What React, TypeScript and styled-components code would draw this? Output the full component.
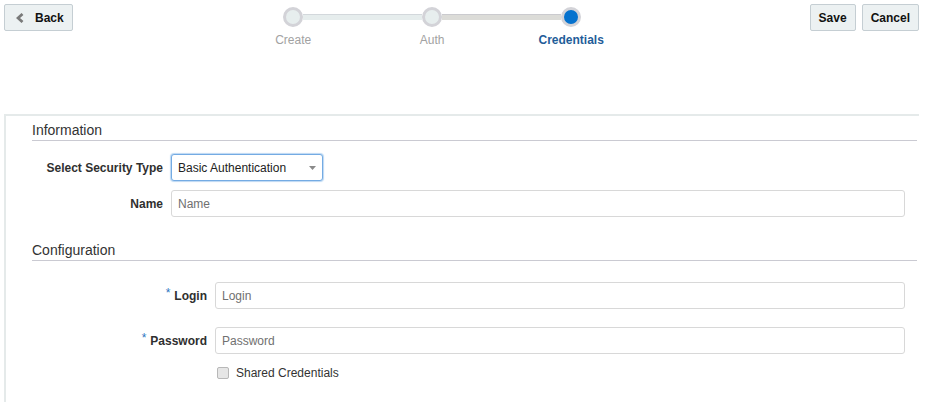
import React from "react";
import styled, { createGlobalStyle } from "styled-components";

const GlobalStyle = createGlobalStyle`
  html, body { margin: 0; padding: 0; background: #ffffff; }
  body {
    font-family: "Liberation Sans", Arial, sans-serif;
    color: #333333;
    overflow: hidden;
  }
  * { box-sizing: border-box; }
`;

const Page = styled.div`
  width: 925px;
  height: 402px;
  display: flex;
  flex-direction: column;
`;

const Header = styled.header`
  height: 114px;
  flex: none;
  display: flex;
  align-items: flex-start;
  padding: 4px 6px 0 4px;
`;

const ToolButton = styled.button<{ $icon?: boolean }>`
  height: 27px;
  display: inline-flex;
  align-items: center;
  gap: 11px;
  padding: ${(p) => (p.$icon ? "0 8px 0 11px" : "0 8px")};
  background: #ecf1f2;
  border: 1px solid #c5ced3;
  border-radius: 2px;
  font-family: "Liberation Sans", Arial, sans-serif;
  font-size: 12px;
  font-weight: bold;
  color: #111111;
  cursor: pointer;
`;

const Actions = styled.div`
  margin-left: auto;
  display: flex;
  gap: 6px;
`;

const Stepper = styled.div`
  display: flex;
  margin-left: 151px;
  margin-top: 3px;
`;

const Step = styled.div`
  width: 139px;
  display: flex;
  flex-direction: column;
  align-items: stretch;
`;

const Track = styled.div`
  height: 20px;
  display: flex;
  align-items: center;
`;

const Line = styled.div<{ $tone: "none" | "light" | "dark" }>`
  flex: 1;
  height: 6px;
  background: ${(p) =>
    p.$tone === "none" ? "transparent" : p.$tone === "light" ? "#e6eded" : "#dcdcd8"};
  border-top: 1px solid
    ${(p) =>
      p.$tone === "none" ? "transparent" : p.$tone === "light" ? "#d3d8dc" : "#cbcbcf"};
`;

const Dot = styled.div<{ $active?: boolean }>`
  width: 20px;
  height: 20px;
  flex: none;
  border-radius: 50%;
  border: 3px solid #d3d3d8;
  background: ${(p) => (p.$active ? "#0572ce" : "#e7eeee")};
`;

const StepLabel = styled.div<{ $active?: boolean }>`
  margin-top: 6px;
  text-align: center;
  font-size: 12px;
  line-height: 14px;
  font-weight: ${(p) => (p.$active ? "bold" : "normal")};
  color: ${(p) => (p.$active ? "#1f5d99" : "#a2a2a2")};
`;

const Panel = styled.main`
  flex: 1;
  margin: 0 6px 0 4px;
  border-left: 2px solid #e5eaea;
  border-top: 2px solid #e5eaea;
  padding: 0 2px 0 26px;
`;

const SectionHeading = styled.h2<{ $gap: number }>`
  margin: ${(p) => p.$gap}px 0 0 0;
  padding-top: 4px;
  font-size: 14px;
  line-height: 20px;
  font-weight: normal;
  color: #333333;
  border-bottom: 1px solid #cacad2;
`;

const FormGrid = styled.div<{ $labelWidth: number; $rowGap: number; $top: number }>`
  display: grid;
  grid-template-columns: ${(p) => p.$labelWidth}px 1fr;
  column-gap: 8px;
  row-gap: ${(p) => p.$rowGap}px;
  margin-top: ${(p) => p.$top}px;
  padding-right: 12px;
`;

const FieldLabel = styled.label`
  align-self: center;
  text-align: right;
  font-size: 12px;
  font-weight: bold;
  color: #2f2f2f;
  white-space: nowrap;
`;

const Req = styled.span`
  display: inline-block;
  transform: translateY(-3px);
  margin-right: 4px;
  font-weight: normal;
  color: #2d75bf;
  font-size: 12px;
`;

const TextInput = styled.input`
  width: 100%;
  height: 27px;
  border: 1px solid #d8d8d8;
  border-radius: 3px;
  padding: 0 6px;
  font-family: "Liberation Sans", Arial, sans-serif;
  font-size: 12px;
  color: #333333;
  background: #ffffff;
  outline: none;
  &::placeholder { color: #707070; }
`;

const SelectBox = styled.div`
  justify-self: start;
  width: 152px;
  height: 27px;
  display: flex;
  align-items: center;
  justify-content: space-between;
  padding: 0 6px;
  border: 1px solid #74abe3;
  box-shadow: 0 0 1px 1px #bcd8f3;
  border-radius: 3px;
  font-size: 12px;
  color: #222222;
  background: #ffffff;
`;

const CheckRow = styled.label`
  grid-column: 2;
  margin-top: -6px;
  padding-left: 2px;
  display: flex;
  align-items: center;
  gap: 7px;
  font-size: 12px;
  line-height: 14px;
  color: #333333;
`;

const Check = styled.input`
  appearance: none;
  margin: 0;
  width: 12px;
  height: 12px;
  border: 1px solid #b8b8b8;
  border-radius: 2px;
  background: #e6e6e6;
`;

const BackIcon = () => (
  <svg width="8" height="10" viewBox="0 0 8 10" aria-hidden="true">
    <polyline points="6.5,1 2,5 6.5,9" fill="none" stroke="#7a7a7a" strokeWidth="2.8" />
  </svg>
);

const Caret = () => (
  <svg width="7" height="4" viewBox="0 0 7 4" aria-hidden="true">
    <polygon points="0,0 7,0 3.5,4" fill="#8a8a8a" />
  </svg>
);

const steps = [
  { label: "Create", left: "none", right: "light" },
  { label: "Auth", left: "light", right: "dark" },
  { label: "Credentials", left: "dark", right: "none", active: true },
] as const;

export default function App() {
  return (
    <>
      <GlobalStyle />
      <Page>
        <Header>
          <ToolButton $icon>
            <BackIcon />
            Back
          </ToolButton>
          <Stepper>
            {steps.map((s) => (
              <Step key={s.label}>
                <Track>
                  <Line $tone={s.left} />
                  <Dot $active={"active" in s} />
                  <Line $tone={s.right} />
                </Track>
                <StepLabel $active={"active" in s}>{s.label}</StepLabel>
              </Step>
            ))}
          </Stepper>
          <Actions>
            <ToolButton>Save</ToolButton>
            <ToolButton>Cancel</ToolButton>
          </Actions>
        </Header>
        <Panel>
          <SectionHeading $gap={0}>Information</SectionHeading>
          <FormGrid $labelWidth={131} $rowGap={9} $top={13}>
            <FieldLabel>Select Security Type</FieldLabel>
            <SelectBox role="combobox">
              <span>Basic Authentication</span>
              <Caret />
            </SelectBox>
            <FieldLabel>Name</FieldLabel>
            <TextInput placeholder="Name" />
          </FormGrid>
          <SectionHeading $gap={19}>Configuration</SectionHeading>
          <FormGrid $labelWidth={175} $rowGap={18} $top={21}>
            <FieldLabel>
              <Req>*</Req>Login
            </FieldLabel>
            <TextInput placeholder="Login" />
            <FieldLabel>
              <Req>*</Req>Password
            </FieldLabel>
            <TextInput placeholder="Password" type="password" />
            <CheckRow>
              <Check type="checkbox" />
              Shared Credentials
            </CheckRow>
          </FormGrid>
        </Panel>
      </Page>
    </>
  );
}
